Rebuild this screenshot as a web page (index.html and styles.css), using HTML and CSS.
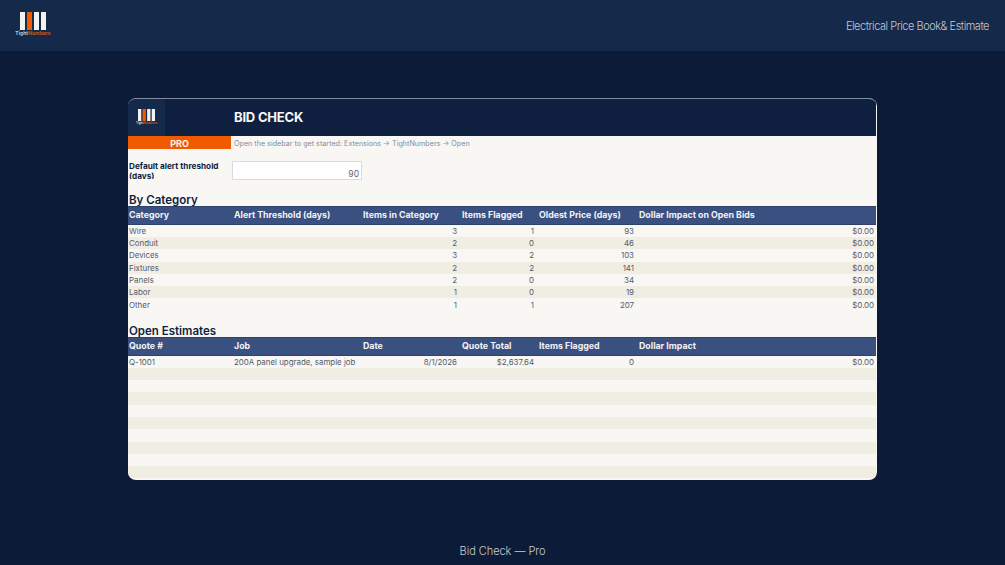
FILE: index.html
```html
<!DOCTYPE html>
<html lang="en">
<head>
    <meta charset="UTF-8">
    <title>Bid Check - Pro</title>
    <link rel="stylesheet" href="styles.css">
</head>
<body>
    <header class="topbar">
        <div class="brand">
            <svg class="bars" width="26" height="18" viewBox="0 0 26 18">
                <rect x="0" y="0" width="5" height="18" fill="#f4f2ee"/>
                <rect x="7" y="0" width="5" height="18" fill="#f05a00"/>
                <rect x="14" y="0" width="5" height="18" fill="#f4f2ee"/>
                <rect x="21" y="0" width="5" height="18" fill="#f4f2ee"/>
            </svg>
            <div class="brand-name">Tight<span class="orange">Numbers</span></div>
        </div>
        <div class="topbar-title">Electrical Price Book&amp; Estimate</div>
    </header>

    <main class="stage">
        <section class="sheet">
            <div class="sheet-head">
                <div class="sheet-logo">
                    <svg width="17" height="12" viewBox="0 0 26 18" preserveAspectRatio="none">
                        <rect x="0" y="0" width="5" height="18" fill="#f4f2ee"/>
                        <rect x="7" y="0" width="5" height="18" fill="#f05a00"/>
                        <rect x="14" y="0" width="5" height="18" fill="#f4f2ee"/>
                        <rect x="21" y="0" width="5" height="18" fill="#f4f2ee"/>
                    </svg>
                    <div class="sheet-logo-name">Tight<span class="orange">Numbers</span></div>
                </div>
                <h1 class="sheet-title">BID CHECK</h1>
            </div>

            <div class="pro-row">
                <div class="pro-badge">PRO</div>
                <div class="pro-hint">Open the sidebar to get started: Extensions → TightNumbers → Open</div>
            </div>

            <div class="threshold-row">
                <div class="threshold-label">Default alert threshold (days)</div>
                <div class="threshold-input">90</div>
            </div>

            <h2 class="section-title title-category">By Category</h2>
            <table class="data">
                <colgroup>
                    <col class="c1"><col class="c2"><col class="c3"><col class="c4"><col class="c5"><col class="c6">
                </colgroup>
                <thead>
                    <tr><th>Category</th><th>Alert Threshold (days)</th><th>Items in Category</th><th>Items Flagged</th><th>Oldest Price (days)</th><th>Dollar Impact on Open Bids</th></tr>
                </thead>
                <tbody>
                    <tr><td>Wire</td><td></td><td class="num">3</td><td class="num">1</td><td class="num">93</td><td class="num">$0.00</td></tr>
                    <tr><td>Conduit</td><td></td><td class="num">2</td><td class="num">0</td><td class="num">46</td><td class="num">$0.00</td></tr>
                    <tr><td>Devices</td><td></td><td class="num">3</td><td class="num">2</td><td class="num">103</td><td class="num">$0.00</td></tr>
                    <tr><td>Fixtures</td><td></td><td class="num">2</td><td class="num">2</td><td class="num">141</td><td class="num">$0.00</td></tr>
                    <tr><td>Panels</td><td></td><td class="num">2</td><td class="num">0</td><td class="num">34</td><td class="num">$0.00</td></tr>
                    <tr><td>Labor</td><td></td><td class="num">1</td><td class="num">0</td><td class="num">19</td><td class="num">$0.00</td></tr>
                    <tr><td>Other</td><td></td><td class="num">1</td><td class="num">1</td><td class="num">207</td><td class="num">$0.00</td></tr>
                </tbody>
            </table>

            <h2 class="section-title title-estimates">Open Estimates</h2>
            <table class="data">
                <colgroup>
                    <col class="c1"><col class="c2"><col class="c3"><col class="c4"><col class="c5"><col class="c6">
                </colgroup>
                <thead>
                    <tr><th>Quote #</th><th>Job</th><th>Date</th><th>Quote Total</th><th>Items Flagged</th><th>Dollar Impact</th></tr>
                </thead>
                <tbody>
                    <tr><td>Q-1001</td><td>200A panel upgrade, sample job</td><td class="num">8/1/2026</td><td class="num">$2,637.64</td><td class="num">0</td><td class="num">$0.00</td></tr>
                    <tr><td></td><td></td><td></td><td></td><td></td><td></td></tr>
                    <tr><td></td><td></td><td></td><td></td><td></td><td></td></tr>
                    <tr><td></td><td></td><td></td><td></td><td></td><td></td></tr>
                    <tr><td></td><td></td><td></td><td></td><td></td><td></td></tr>
                    <tr><td></td><td></td><td></td><td></td><td></td><td></td></tr>
                    <tr><td></td><td></td><td></td><td></td><td></td><td></td></tr>
                    <tr><td></td><td></td><td></td><td></td><td></td><td></td></tr>
                    <tr><td></td><td></td><td></td><td></td><td></td><td></td></tr>
                    <tr><td></td><td></td><td></td><td></td><td></td><td></td></tr>
                </tbody>
            </table>
        </section>
    </main>

    <footer class="footer">Bid Check — Pro</footer>
</body>
</html>
```

FILE: styles.css
```css
* {
    box-sizing: border-box;
}
html, body {
    height: 100%;
}
body {
    margin: 0;
    height: 565px;
    overflow: hidden;
    background-color: #0c1b38;
    font-family: Inter, "Noto Sans", sans-serif;
    display: flex;
    flex-direction: column;
}
.orange {
    color: #c9541a;
}

/* top bar */
.topbar {
    height: 51px;
    flex: none;
    background-color: #15294b;
    display: flex;
    align-items: flex-start;
    justify-content: space-between;
    padding: 12px 16px 0 16px;
}
.brand {
    width: 34px;
    display: flex;
    flex-direction: column;
    align-items: center;
}
.bars {
    display: block;
}
.brand-name {
    font-size: 5px;
    line-height: 6px;
    font-weight: 700;
    color: #c4c8d0;
    white-space: nowrap;
}
.topbar-title {
    margin-top: 7px;
    font-size: 11px;
    line-height: 14px;
    font-weight: 300;
    letter-spacing: -0.48px;
    color: #c4c7cd;
}

/* sheet */
.stage {
    flex: 1;
    padding: 47px 128px 0 128px;
}
.sheet {
    width: 749px;
    height: 382px;
    background-color: #f9f7f3;
    border-radius: 8px;
    overflow: hidden;
    border-top: 1px solid #7f8ba3;
}
.sheet-head {
    width: 748px;
    height: 37px;
    background-color: #0e1f3f;
    display: flex;
    align-items: center;
}
.sheet-logo {
    width: 37px;
    height: 37px;
    background-color: #15294b;
    display: flex;
    flex-direction: column;
    align-items: center;
    justify-content: center;
}
.sheet-logo svg {
    display: block;
}
.sheet-logo-name {
    font-size: 3px;
    line-height: 5px;
    font-weight: 700;
    color: #d0d3da;
    white-space: nowrap;
}
.sheet-title {
    margin: 0 0 2px 69px;
    font-size: 13px;
    font-weight: 700;
    color: #f9f7f3;
    letter-spacing: -0.2px;
}
.pro-row {
    display: flex;
    height: 13px;
}
.pro-badge {
    width: 103px;
    background-color: #f05a00;
    color: #f9f7f3;
    font-size: 9px;
    line-height: 15px;
    font-weight: 700;
    text-align: center;
}
.pro-hint {
    padding-left: 3px;
    font-size: 7.2px;
    line-height: 16px;
    color: #858c9b;
}
.threshold-row {
    display: flex;
    align-items: flex-start;
    margin-top: 12px;
    height: 20px;
}
.threshold-label {
    width: 104px;
    height: 18px;
    overflow: hidden;
    padding: 1px 0 0 1px;
    font-size: 8.2px;
    line-height: 9.5px;
    font-weight: 700;
    color: #0e1f3f;
}
.threshold-input {
    width: 130px;
    height: 19px;
    background-color: #fff;
    border: 1px solid #d8dbe2;
    padding: 7px 2px 0 0;
    text-align: right;
    font-size: 8.5px;
    line-height: 10px;
    color: #5c6579;
}
.section-title {
    margin: 0;
    padding-left: 1px;
    height: 12px;
    line-height: 12px;
    font-size: 11.5px;
    font-weight: 600;
    color: #0e1f3f;
}
.title-category {
    margin-top: 13px;
}
.title-estimates {
    margin-top: 14px;
}

/* tables */
.data {
    width: 748px;
    table-layout: fixed;
    border-collapse: collapse;
}
.c1 { width: 103px; }
.c2 { width: 129px; }
.c3 { width: 99px; }
.c4 { width: 77px; }
.c5 { width: 100px; }
.c6 { width: 240px; }
.data th {
    height: 18px;
    padding: 0 0 2px 3px;
    background-color: #3a5080;
    color: #f2f3f6;
    font-size: 8.8px;
    font-weight: 700;
    text-align: left;
    white-space: nowrap;
    border-top: 1px solid #2e4269;
    border-bottom: 1px solid #2e4269;
}
.data th:first-child {
    padding-left: 1px;
}
.data td {
    height: 12.3px;
    padding: 0 0 0 3px;
    font-size: 7.9px;
    line-height: 12px;
    color: #525b6f;
    white-space: nowrap;
}
.data td:first-child {
    padding-left: 1px;
}
.data td.num {
    padding: 0 2px 0 0;
    text-align: right;
}
.data tbody tr:nth-child(even) {
    background-color: #f0ede3;
}

.footer {
    height: 29px;
    flex: none;
    padding-top: 8px;
    text-align: center;
    font-size: 11px;
    font-weight: 300;
    letter-spacing: -0.05px;
    line-height: 14px;
    color: #c8ccd4;
}
```
